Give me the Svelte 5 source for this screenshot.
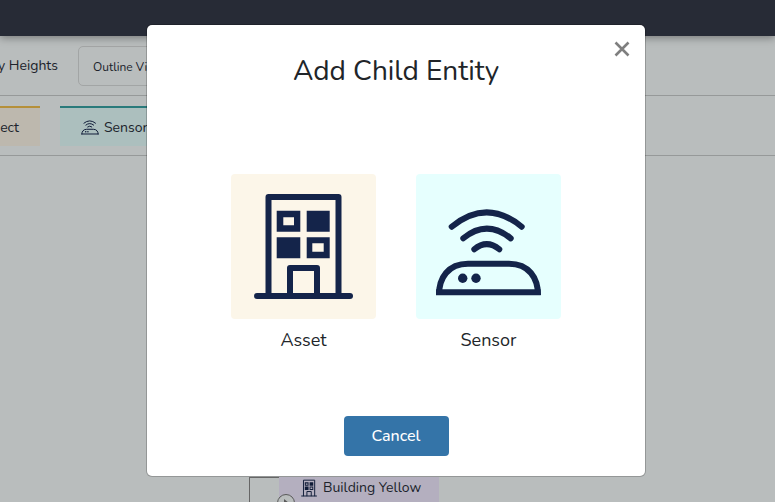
<script>
  const bigBox = '0 0 145 145';
  const smallBuilding = '22 18 100 108';
  const smallSensor = '18 34 109 90';
</script>

{#snippet building(w, h, box)}
  <svg class="icon" width={w} height={h} viewBox={box} aria-hidden="true">
    <g fill="none" stroke="#14244a" stroke-width="6" stroke-linejoin="round" stroke-linecap="round">
      <path d="M37.500 121V23H107.500V121" />
      <path d="M59 121V94H86V121" />
      <path d="M26 122H119" />
    </g>
    <path fill="#14244a" fill-rule="evenodd" d="M45.700 36.700H69.300V57.700H45.700ZM52.300 43.300V51.300H63V43.300ZM75.700 36.700H98.700V57.700H75.700ZM45.700 63.300H69.300V84.300H45.700ZM75.700 63.300H98.700V84.300H75.700ZM81.300 69.300V77.700H92.700V69.300Z" />
  </svg>
{/snippet}

{#snippet sensor(w, h, box)}
  <svg class="icon" width={w} height={h} viewBox={box} aria-hidden="true">
    <g fill="none" stroke="#14244a" stroke-width="6" stroke-linecap="round">
      <path d="M35.700 52.700Q70.700 24 105.700 52.700" />
      <path d="M47.300 64.300Q70.700 45 94.700 64.300" />
      <path d="M58.300 75.300Q70.700 65 83.300 75.300" />
    </g>
    <path fill="none" stroke="#14244a" stroke-width="6" d="M23 121C23 104 32 89.700 52 89.700H93C113 89.700 122 104 122 121" />
    <path fill="#14244a" d="M20 115.300H124.700V121.300H20Z" />
    <circle cx="46.700" cy="104.300" r="4.700" fill="#14244a" />
    <circle cx="60" cy="104.300" r="4.700" fill="#14244a" />
  </svg>
{/snippet}

<div class="page">
  <header class="topbar"></header>

  <div class="toolbar">
    <div class="clip-left heights"><span>Display Heights</span></div>
    <button class="outline">Outline View</button>
  </div>

  <div class="tabs">
    <div class="clip-left tab tab-object"><span>Add Object</span></div>
    <div class="tab tab-sensor">
      {@render sensor(18, 15, smallSensor)}
      <span>Sensor</span>
    </div>
  </div>

  <div class="canvas">
    <div class="tree">
      <div class="tree-row">
        <span class="branch"></span>
        <div class="node">
          {@render building(16, 18, smallBuilding)}
          <span>Building Yellow</span>
        </div>
      </div>
      <span class="toggle"></span>
    </div>
  </div>

  <div class="overlay">
    <div class="modal">
      <button class="close" aria-label="Close">
        <svg width="16" height="16" viewBox="0 0 16 16">
          <path d="M1.500 1.500L14.500 14.500M14.500 1.500L1.500 14.500" stroke="#7f7f7f" stroke-width="2.600" fill="none" />
        </svg>
      </button>
      <h2>Add Child Entity</h2>
      <div class="choices">
        <div class="choice">
          <div class="tile tile-asset">{@render building(145, 145, bigBox)}</div>
          <span>Asset</span>
        </div>
        <div class="choice">
          <div class="tile tile-sensor">{@render sensor(145, 145, bigBox)}</div>
          <span>Sensor</span>
        </div>
      </div>
      <button class="cancel">Cancel</button>
    </div>
  </div>
</div>

<style>
  :global(body) {
    margin: 0;
    overflow: hidden;
  }

  .page {
    position: relative;
    width: 775px;
    height: 502px;
    overflow: hidden;
    background: #f7fcfc;
    font-family: "Nunito", "Lato", "Open Sans", sans-serif;
    color: #2a2f3a;
    display: flex;
    flex-direction: column;
  }

  .icon {
    display: block;
    flex: none;
  }

  .topbar {
    height: 36px;
    flex: none;
    background: #343a49;
    box-shadow: 0 2px 8px rgba(0, 0, 0, 0.35);
    position: relative;
  }

  .toolbar {
    height: 59px;
    flex: none;
    display: flex;
    align-items: center;
    gap: 20px;
    border-bottom: 1px solid #c9cccc;
    font-size: 14px;
  }

  .clip-left {
    display: flex;
    justify-content: flex-end;
    overflow: hidden;
    white-space: nowrap;
    flex: none;
  }

  .heights {
    width: 58px;
    margin-top: -1px;
  }

  .outline {
    width: 140px;
    height: 40px;
    margin-top: 1px;
    padding: 2px 0 0 14px;
    text-align: left;
    background: transparent;
    border: 1px solid #d9dcdc;
    border-radius: 5px;
    font: inherit;
    font-size: 12px;
    color: inherit;
  }

  .tabs {
    height: 60px;
    flex: none;
    box-sizing: border-box;
    display: flex;
    align-items: flex-start;
    gap: 20px;
    padding-top: 10px;
    border-bottom: 1px solid #c9cccc;
    font-size: 14px;
  }

  .tab {
    height: 40px;
    box-sizing: border-box;
    display: flex;
    align-items: center;
    border-top: 2px solid;
  }

  .tab-object {
    width: 40px;
    padding-right: 21px;
    background: #fcf6e9;
    border-color: #f2c14e;
  }

  .tab-sensor {
    width: 140px;
    padding-left: 21px;
    gap: 5px;
    background: #e6fffe;
    border-color: #38a3a5;
  }

  .canvas {
    flex: 1;
    min-height: 0;
    display: flex;
    flex-direction: column;
    justify-content: flex-end;
  }

  .tree {
    height: 25px;
    margin-left: 249px;
    border-left: 1px solid #888;
    position: relative;
  }

  .tree-row {
    display: flex;
    align-items: flex-start;
  }

  .branch {
    width: 29px;
    border-top: 1px solid #888;
  }

  .node {
    width: 160px;
    height: 25px;
    display: flex;
    align-items: flex-start;
    gap: 6px;
    padding: 2px 0 0 22px;
    box-sizing: border-box;
    background: #f0eaff;
    font-size: 14px;
    line-height: 18px;
  }

  .toggle {
    position: absolute;
    left: 27px;
    top: 17px;
    width: 18px;
    height: 18px;
    box-sizing: border-box;
    border: 1.500px solid #777;
    border-radius: 50%;
    background: #f7fcfc;
  }

  .toggle::after {
    content: "";
    display: block;
    width: 0;
    height: 0;
    margin: 4px 0 0 6px;
    border-left: 5px solid #777;
    border-top: 4px solid transparent;
    border-bottom: 4px solid transparent;
  }

  .overlay {
    position: absolute;
    inset: 0;
    background: rgba(0, 0, 0, 0.25);
  }

  .modal {
    position: absolute;
    left: 147px;
    top: 25px;
    width: 498px;
    height: 451px;
    box-sizing: border-box;
    background: #fff;
    border-radius: 5px;
    box-shadow: 0 0 0 1px rgba(0, 0, 0, 0.2);
    display: flex;
    flex-direction: column;
    align-items: center;
    color: #212529;
  }

  .close {
    position: absolute;
    right: 15px;
    top: 16px;
    width: 16px;
    height: 16px;
    padding: 0;
    border: 0;
    background: none;
    line-height: 0;
  }

  h2 {
    margin: 26px 0 0;
    font-size: 28px;
    line-height: 40px;
    font-weight: 400;
  }

  .choices {
    display: flex;
    gap: 40px;
    margin-top: 83px;
  }

  .choice {
    display: flex;
    flex-direction: column;
    align-items: center;
    gap: 9px;
    font-size: 18px;
    line-height: 25px;
  }

  .tile {
    width: 145px;
    height: 145px;
    border-radius: 4px;
  }

  .tile-asset {
    background: #fcf6e9;
  }

  .tile-sensor {
    background: #e6fffe;
  }

  .cancel {
    margin-top: 63px;
    width: 105px;
    height: 40px;
    border: 0;
    border-radius: 4px;
    background: #3474a8;
    color: #fff;
    font: inherit;
    font-size: 16px;
    font-weight: 500;
  }
</style>
